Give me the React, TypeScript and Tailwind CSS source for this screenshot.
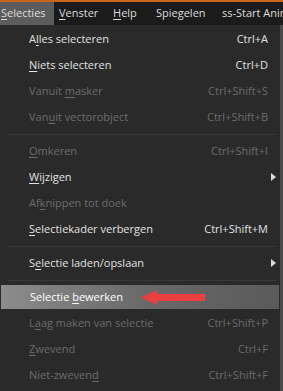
import React from "react";

type Item = {
  label: React.ReactNode;
  shortcut?: string;
  disabled?: boolean;
  sub?: boolean;
  active?: boolean;
  sepAfter?: boolean;
};

const U = ({ children }: { children: React.ReactNode }) => <span className="underline underline-offset-2">{children}</span>;

const items: Item[] = [
  { label: <>A<U>l</U>les selecteren</>, shortcut: "Ctrl+A" },
  { label: <><U>N</U>iets selecteren</>, shortcut: "Ctrl+D" },
  { label: <>Vanuit <U>m</U>asker</>, shortcut: "Ctrl+Shift+S", disabled: true },
  { label: <>Van<U>u</U>it vectorobject</>, shortcut: "Ctrl+Shift+B", disabled: true, sepAfter: true },
  { label: <><U>O</U>mkeren</>, shortcut: "Ctrl+Shift+I", disabled: true },
  { label: <><U>W</U>ijzigen</>, sub: true },
  { label: <>Af<U>k</U>nippen tot doek</>, disabled: true },
  { label: <><U>S</U>electiekader verbergen</>, shortcut: "Ctrl+Shift+M", sepAfter: true },
  { label: <>S<U>e</U>lectie laden/opslaan</>, sub: true, sepAfter: true },
  { label: <>Selectie <U>b</U>ewerken</>, active: true },
  { label: <>L<U>a</U>ag maken van selectie</>, shortcut: "Ctrl+Shift+P", disabled: true },
  { label: <><U>Z</U>wevend</>, shortcut: "Ctrl+F", disabled: true },
  { label: <>Niet-zweven<U>d</U></>, shortcut: "Ctrl+Shift+F", disabled: true },
];

const App = () => {
  return (
    <div
      className="w-[283px] h-[391px] overflow-hidden bg-[#3a3a3a] text-[11px] flex flex-col"
      style={{ fontFamily: "'Open Sans', 'Noto Sans', sans-serif" }}
    >
      {/* menu bar */}
      <div className="h-[2px] bg-[#c8641e]" />
      <div className="h-[23px] bg-[#1b1b1b] flex items-center text-[#dcdcdc] whitespace-nowrap overflow-hidden">
        <div className="h-full w-[54px] shrink-0 flex items-center bg-[#5c5c5c] pl-[1px]">
          <span><U>S</U>electies</span>
        </div>
        <div className="w-[59px] shrink-0 pl-[5px]"><U>V</U>enster</div>
        <div className="w-[43px] shrink-0"><U>H</U>elp</div>
        <div className="w-[66px] shrink-0">Spiegelen</div>
        <div className="shrink-0">ss-Start Anim</div>
      </div>

      {/* dropdown */}
      <div className="flex flex-1">
        <div className="w-[280px] bg-[#2a2a2a] pt-[1px] flex flex-col">
          {items.map((it, i) => (
            <React.Fragment key={i}>
              <div
                className={
                  "relative flex items-center pl-[29px] pr-[12px] whitespace-nowrap " +
                  (it.active
                    ? "bg-gradient-to-r from-[#8c8c8c] via-[#6a6a6a] to-[#5a5a5a] text-white mx-[1px] h-[24px] my-[1px]"
                    : it.disabled
                    ? "h-[26px] text-[#6c6c6c]"
                    : "h-[26px] text-[#e2e2e2]")
                }
              >
                <span className="flex-1">{it.label}</span>
                {it.shortcut && <span>{it.shortcut}</span>}
                {it.sub && (
                  <svg width="5" height="8" viewBox="0 0 5 8" className="absolute right-[4px]">
                    <path d="M0 0 L5 4 L0 8 Z" fill="#dcdcdc" />
                  </svg>
                )}
                {it.active && (
                  <svg width="66" height="15" viewBox="0 0 66 15" className="absolute left-[140px]">
                    <path d="M0 7.5 L16 0 L16 4 L64 4 L64 11 L16 11 L16 15 Z" fill="#ea3f3f" />
                  </svg>
                )}
              </div>
              {it.sepAfter && (
                <div className="h-[8px] flex items-center pl-[8px] pr-[4px]">
                  <div className="h-[1px] w-full bg-[#383838]" />
                </div>
              )}
            </React.Fragment>
          ))}
        </div>
        <div className="flex-1 bg-[#4a4a4a]" />
      </div>
    </div>
  );
};

export default App;
